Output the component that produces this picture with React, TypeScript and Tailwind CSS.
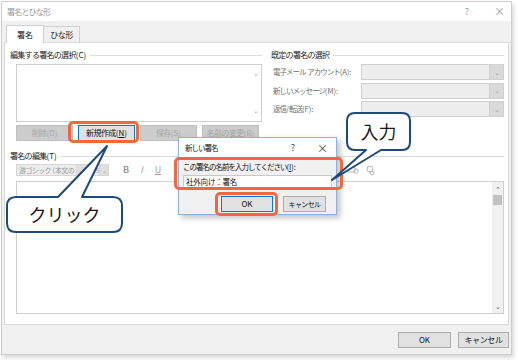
const font = { fontFamily: '"Noto Sans CJK JP", "Noto Sans", sans-serif' }

// ASCII parts keep normal spacing, CJK parts are squeezed by the parent's tracking
const jp = (text: string) =>
  text.split(/([\x20-\x7e]+)/).filter(Boolean).map((part, i) =>
    /^[\x20-\x7e]+$/.test(part) ? (
      <span key={i} className="tracking-[0px]">{part}</span>
    ) : (
      <span key={i}>{part}</span>
    )
  )

const GroupLabel = ({ text, className = "" }: { text: string; className?: string }) => (
  <div className={`flex items-center h-[12px] ${className}`}>
    <span className="text-[8px] tracking-[-0.7px] leading-[12px] text-[#222] whitespace-nowrap">{jp(text)}</span>
    <div className="flex-1 h-px bg-[#dcdcdc] ml-[4px]" />
  </div>
)

const DisabledButton = ({ label }: { label: string }) => (
  <div className="w-[57px] h-[16px] bg-[#cccccc] border border-[#bfbfbf] flex items-center justify-center text-[8px] tracking-[-0.6px] text-[#a6a6a6]">
    {jp(label)}
  </div>
)

const SelectRow = ({ label }: { label: string }) => (
  <div className="flex items-center h-[16px]">
    <span className="w-[88px] text-[7.5px] tracking-[-1px] text-[#6d6d6d] whitespace-nowrap">{jp(label)}</span>
    <div className="flex-1 h-full border border-[#cfcfcf] bg-[#ededed] flex justify-end">
      <div className="w-[14px] h-full bg-[#d9d9d9] border-l border-[#cfcfcf] flex items-center justify-center text-[7px] text-[#9a9a9a]">⌄</div>
    </div>
  </div>
)

const App = () => {
  return (
    <div className="relative w-[518px] h-[360px] bg-white overflow-hidden" style={font}>
      {/* main dialog */}
      <div className="ml-[1px] mt-[1px] w-[511px] h-[354px] border border-[#cdcdcd] bg-[#f0f0f0] flex flex-col shadow-[2px_3px_4px_rgba(0,0,0,0.15)]">
        <div className="h-[19px] bg-white flex items-center pl-[5px] pr-[6px]">
          <span className="text-[8px] tracking-[-0.8px] text-[#9a9a9a]">署名とひな形</span>
          <span className="ml-auto text-[9px] text-[#9a9a9a] mr-[25px]">?</span>
          <span className="text-[11px] text-[#9a9a9a] leading-none">×</span>
        </div>

        {/* tabs */}
        <div className="flex items-end h-[21px] pl-[4px]">
          <div className="h-[18px] w-[38px] bg-white border border-b-0 border-[#d0d0d0] flex items-center justify-center text-[8px] text-[#111] relative top-px">署名</div>
          <div className="h-[16px] w-[36px] border border-b-0 border-l-0 border-[#d0d0d0] flex items-center justify-center text-[8px] tracking-[-0.5px] text-[#222]">ひな形</div>
        </div>

        {/* panel */}
        <div className="mx-[2px] h-[283px] bg-white border border-[#d9d9d9] pl-[5px] pr-[4px] pt-[6px]">
          <div className="flex">
            {/* left column */}
            <div className="w-[252px]">
              <GroupLabel text="編集する署名の選択(C)" />
              <div className="ml-[6px] mt-[3px] h-[58px] border border-[#cfcfcf] flex justify-end">
                <div className="w-[11px] flex flex-col justify-between items-center text-[7px] text-[#9a9a9a] py-[6px]">
                  <span>⌃</span>
                  <span>⌄</span>
                </div>
              </div>
              <div className="ml-[6px] mt-[3px] flex gap-[5px]">
                <DisabledButton label="削除(D)" />
                <div className="w-[57px] h-[16px] bg-[#e1e1e1] border border-[#0078d7] flex items-center justify-center text-[8px] tracking-[-0.6px] text-[#111]">
                  新規作成<span className="tracking-[0px]">(<span className="underline">N</span>)</span>
                </div>
                <DisabledButton label="保存(S)" />
                <DisabledButton label="名前の変更(R)" />
              </div>
            </div>
            {/* right column */}
            <div className="flex-1 pl-[9px]">
              <GroupLabel text="既定の署名の選択" />
              <div className="pl-[2px] mt-[3px] flex flex-col gap-[2.5px]">
                <SelectRow label="電子メール アカウント(A):" />
                <SelectRow label="新しいメッセージ(M):" />
                <SelectRow label="返信/転送(F):" />
              </div>
            </div>
          </div>

          <GroupLabel text="署名の編集(T)" className="mt-[9px]" />

          {/* toolbar */}
          <div className="ml-[6px] mt-[2px] h-[12px] flex items-center">
            <div className="w-[61px] h-full bg-[#ececec] border border-[#d6d6d6] text-[7px] tracking-[-0.6px] leading-[10px] text-[#9a9a9a] pl-[2px] overflow-hidden whitespace-nowrap">{jp("游ゴシック (本文の")}</div>
            <div className="w-[8px] h-full bg-[#dedede] border border-l-0 border-[#d6d6d6] text-[6px] text-[#aaa] flex items-center justify-center">⌄</div>
            <div className="w-[15px] h-full bg-[#ececec] border border-l-0 border-[#d6d6d6] text-[7px] leading-[10px] text-[#9a9a9a] pl-[1px] overflow-hidden whitespace-nowrap">10.5</div>
            <div className="w-[9px] h-full bg-[#dedede] border border-l-0 border-[#d6d6d6] text-[6px] text-[#aaa] flex items-center justify-center">⌄</div>
            <span className="ml-[14px] text-[9px] font-bold text-[#9a9a9a]">B</span>
            <span className="ml-[11px] text-[9px] italic text-[#9a9a9a]">I</span>
            <span className="ml-[12px] text-[9px] underline text-[#9a9a9a]">U</span>
            <div className="ml-auto mr-[128px] flex items-center gap-[6px]">
              <svg width="12" height="10" viewBox="0 0 12 10">
                <rect x="1" y="2" width="7" height="5" rx="1" fill="none" stroke="#b5b5b5" />
                <circle cx="9" cy="6" r="2.2" fill="none" stroke="#b5b5b5" />
              </svg>
              <svg width="11" height="11" viewBox="0 0 11 11">
                <circle cx="5" cy="4" r="3" fill="none" stroke="#b5b5b5" />
                <circle cx="7" cy="8" r="2" fill="none" stroke="#b5b5b5" />
              </svg>
            </div>
          </div>

          {/* editor */}
          <div className="ml-[6px] mt-[5px] h-[133px] border border-[#cfcfcf] flex justify-end">
            <div className="w-[11px] bg-[#f0f0f0] flex flex-col items-center text-[7px] text-[#606060]">
              <span className="mt-[3px] leading-[8px]">⌃</span>
              <div className="w-[9px] h-[10px] bg-[#c2c2c2] mt-[2px]" />
              <span className="mt-auto mb-[3px] leading-[8px]">⌄</span>
            </div>
          </div>
        </div>

        {/* bottom buttons */}
        <div className="flex-1 flex items-center justify-end gap-[7px] pr-[2px]">
          <div className="w-[53px] h-[16px] bg-[#e1e1e1] border border-[#adadad] flex items-center justify-center text-[8px] text-[#111]">OK</div>
          <div className="w-[51px] h-[16px] bg-[#e1e1e1] border border-[#adadad] flex items-center justify-center text-[8px] tracking-[-0.4px] text-[#111]">キャンセル</div>
        </div>
      </div>

      {/* new signature dialog */}
      <div className="absolute left-[178px] top-[137px] w-[159px] h-[78px] border border-[#8fb1d9] bg-[#f0f0f0] flex flex-col shadow-[3px_3px_6px_rgba(0,0,0,0.25)]">
        <div className="h-[20px] bg-white flex items-center pl-[6px] pr-[8px]">
          <span className="text-[7.5px] tracking-[-1px] text-[#111]">新しい署名</span>
          <span className="ml-auto mr-[22px] text-[9px] text-[#444]">?</span>
          <span className="text-[11px] text-[#444] leading-none">×</span>
        </div>
        <div className="px-[4px] pt-[3px]">
          <div className="text-[7.5px] tracking-[-1px] leading-[12px] text-[#111] whitespace-nowrap">
            この署名の名前を入力してください<span className="tracking-[0px]">(<span className="underline">I</span>):</span>
          </div>
          <div className="mt-[2px] h-[14px] w-[149px] bg-white border border-[#c8c8c8] text-[7.5px] tracking-[-0.2px] leading-[12px] text-[#111] pl-[2px]">社外向け：署名</div>
          <div className="mt-[7px] flex gap-[10px] pl-[38px]">
            <div className="w-[52px] h-[16px] bg-[#e1e1e1] border border-[#0078d7] flex items-center justify-center text-[8px] text-[#111]">OK</div>
            <div className="w-[43px] h-[16px] bg-[#e1e1e1] border border-[#adadad] flex items-center justify-center text-[7px] tracking-[-0.6px] text-[#111]">キャンセル</div>
          </div>
        </div>
      </div>

      {/* orange highlights */}
      <div className="absolute left-[68px] top-[121px] w-[71px] h-[22px] border-[3px] border-[#f2683c] rounded-[5px]" />
      <div className="absolute left-[174px] top-[157px] w-[169px] h-[33px] border-[3px] border-[#f2683c] rounded-[5px]" />
      <div className="absolute left-[215px] top-[192px] w-[63px] h-[24px] border-[3px] border-[#f2683c] rounded-[5px]" />

      {/* callouts */}
      <svg className="absolute left-0 top-0" width="518" height="360" viewBox="0 0 518 360">
        <path
          d="M 355 113 H 402 Q 410 113 410 121 V 142 Q 410 150 402 150 H 381 L 332 180 L 366 150 H 355 Q 347 150 347 142 V 121 Q 347 113 355 113 Z"
          fill="white"
          stroke="#1d4a78"
          strokeWidth="2"
          strokeLinejoin="round"
        />
        <path
          d="M 16 197 H 58 L 107 146 L 82 197 H 113 Q 122 197 122 206 V 223 Q 122 232 113 232 H 16 Q 7 232 7 223 V 206 Q 7 197 16 197 Z"
          fill="white"
          stroke="#1d4a78"
          strokeWidth="2"
          strokeLinejoin="round"
        />
      </svg>
      <div className="absolute left-[347px] top-[113px] w-[63px] h-[37px] flex items-center justify-center text-[18px] text-[#1a1a1a]">入力</div>
      <div className="absolute left-[7px] top-[197px] w-[115px] h-[35px] flex items-center justify-center text-[18px] text-[#1a1a1a]">クリック</div>
    </div>
  )
}

export default App
